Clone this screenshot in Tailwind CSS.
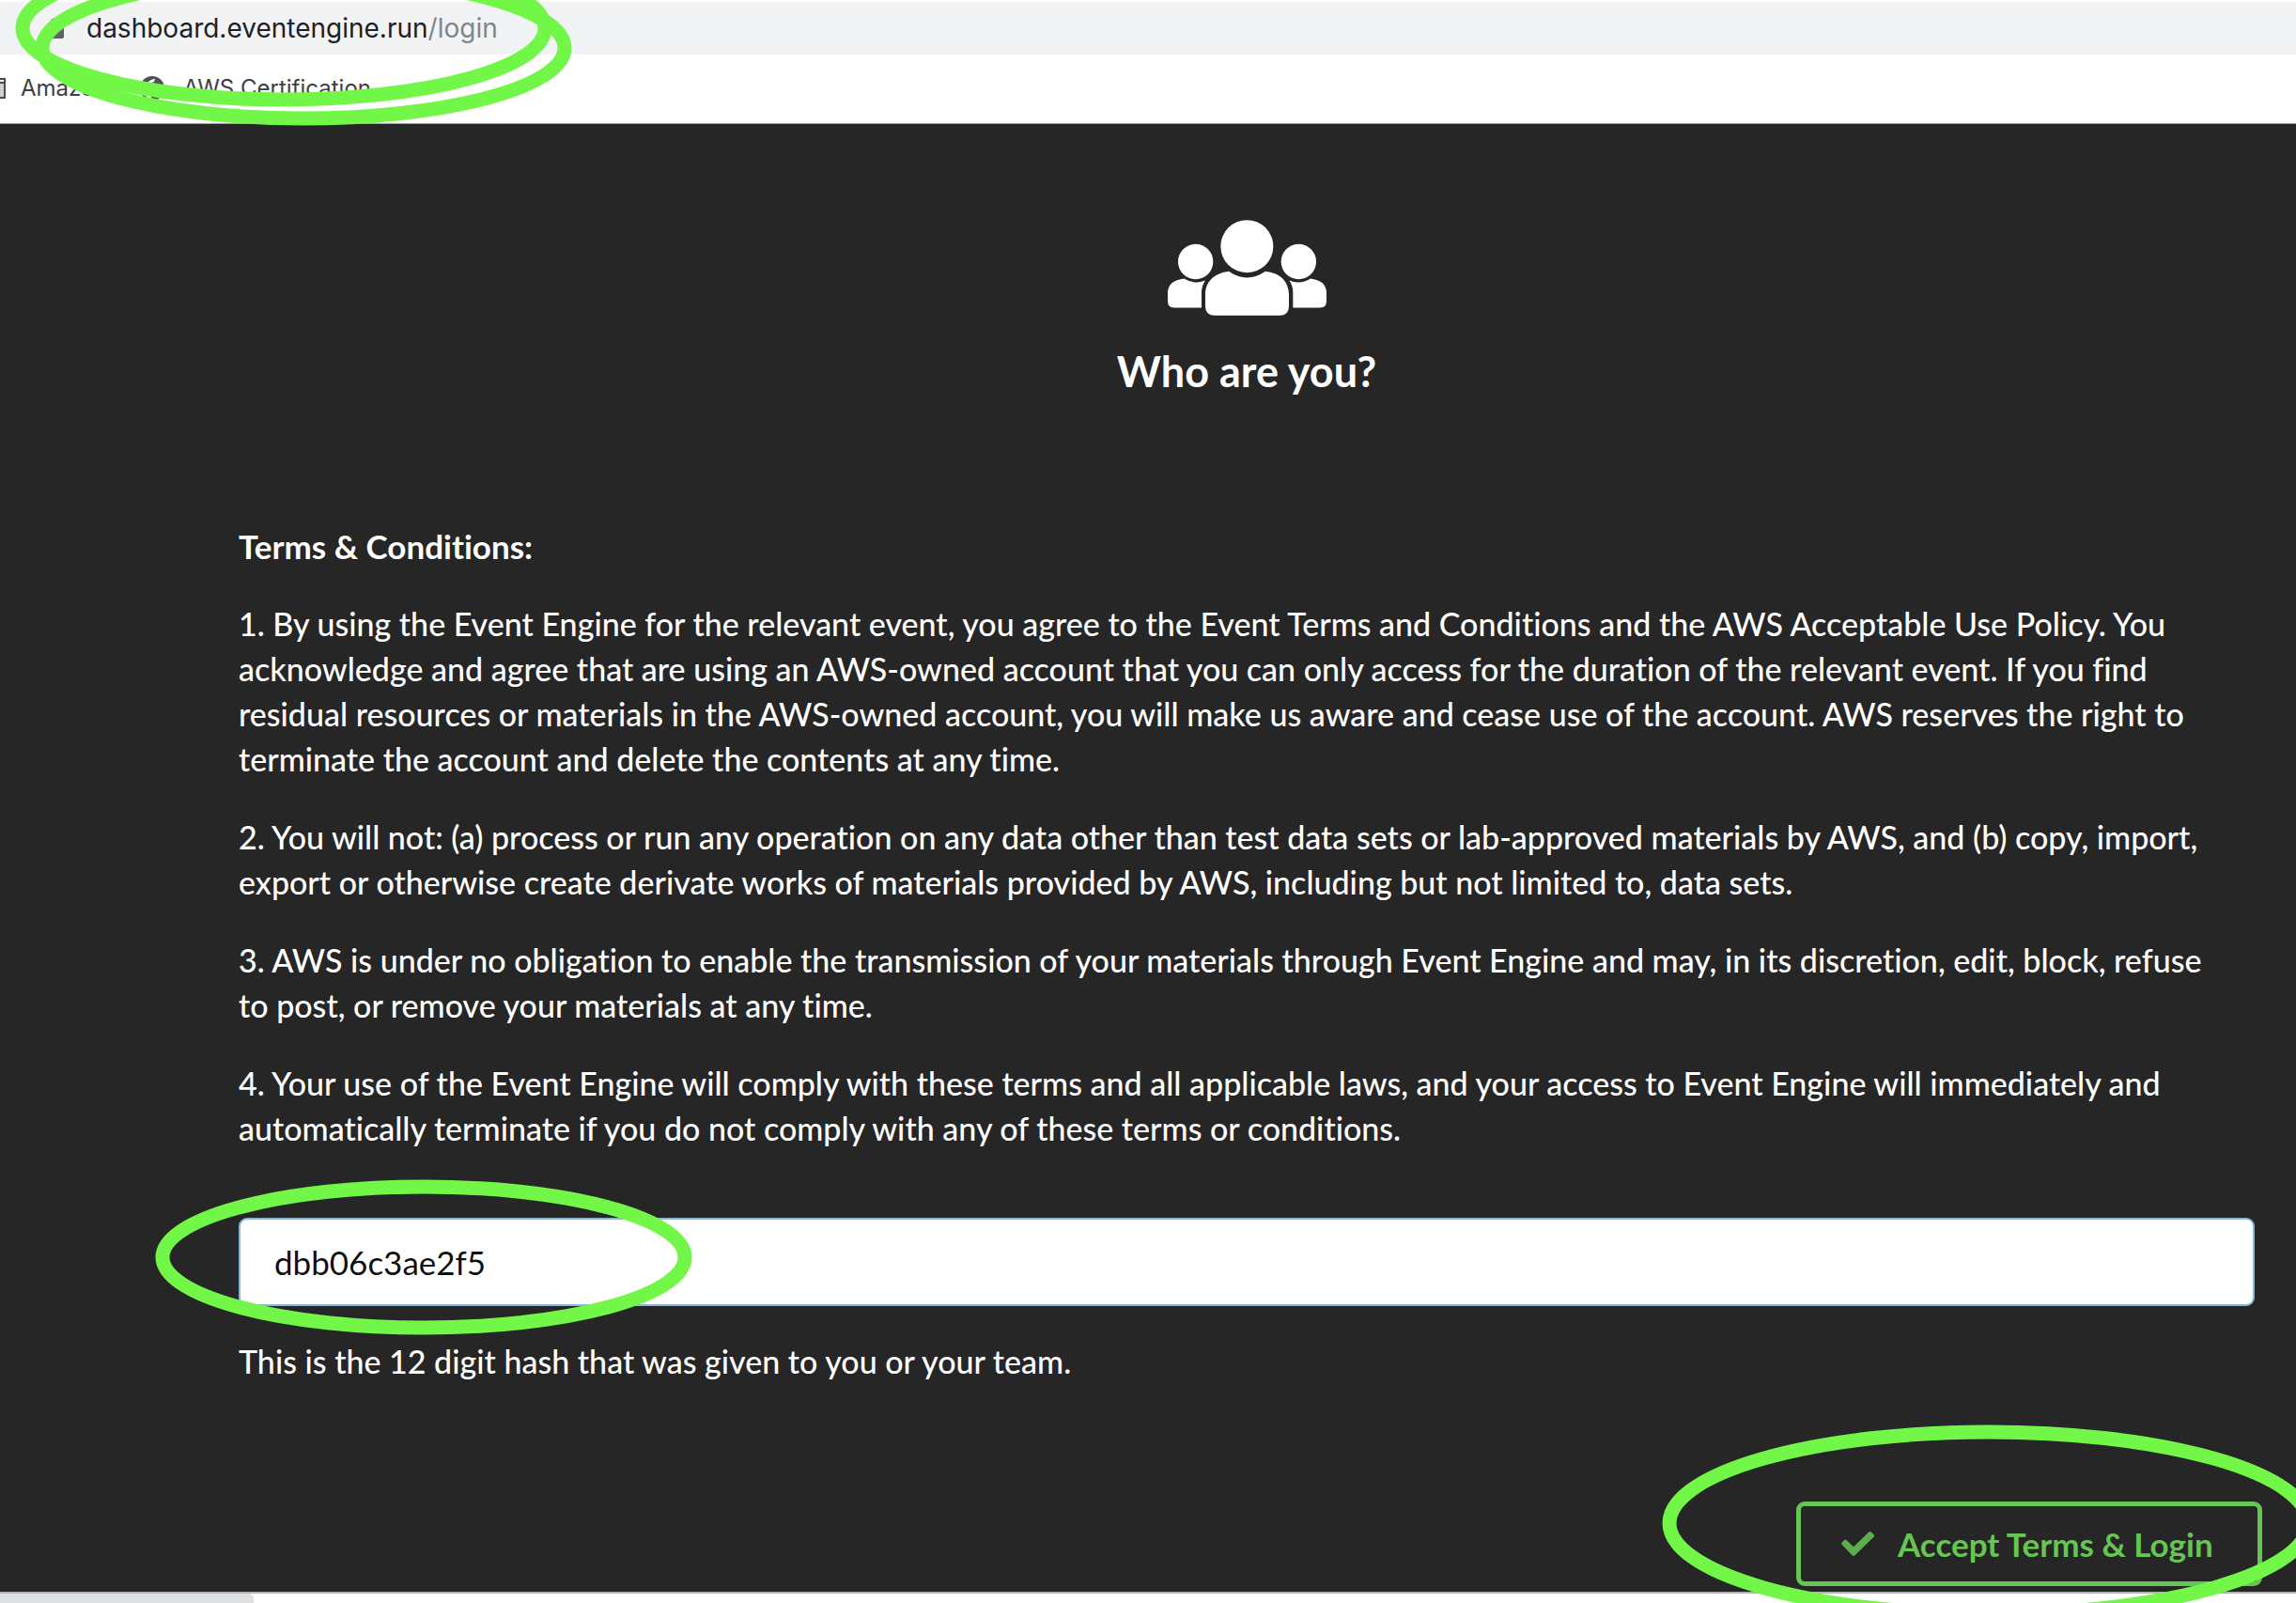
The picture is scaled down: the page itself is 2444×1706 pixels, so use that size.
<!DOCTYPE html>
<html lang="en">
<head>
    <meta charset="UTF-8">
    <meta name="viewport" content="width=device-width, initial-scale=1.0">
    <title>Event Engine - Login</title>
    <script src="https://cdn.jsdelivr.net/npm/@tailwindcss/browser@4"></script>
</head>
<body class="bg-white">
<div class="relative flex min-h-screen flex-col overflow-hidden">

    <!-- Browser bar -->
    <header class="relative border-b border-[#a0a8a4] bg-white font-['Inter',sans-serif]">
        <div class="mt-[2px] flex h-14 items-center gap-6 bg-[#f1f3f4] pl-[50px]">
            <svg class="h-[22px] w-[18px] fill-[#5f6368]" viewBox="0 0 18 22"><path d="M2 8h14a2 2 0 0 1 2 2v10a2 2 0 0 1-2 2H2a2 2 0 0 1-2-2V10a2 2 0 0 1 2-2z"/><path d="M4 9V6a5 5 0 0 1 10 0v3" fill="none" stroke="#5f6368" stroke-width="2"/></svg>
            <a href="#" class="text-[28px] text-[#202124]">dashboard.eventengine.run<span class="text-[#80868b]">/login</span></a>
        </div>
        <nav class="flex h-[73px] items-center pb-[2px] text-[24px] text-[#3c4043]">
            <a href="#" class="flex w-[149px] items-center gap-4">
                <svg class="h-[22px] w-[6px]" viewBox="0 0 6 22"><path d="M0 1h5v20H0" fill="#fff" stroke="#4a4a4a" stroke-width="2"/><path d="M0 5h5" stroke="#4a4a4a" stroke-width="2"/><path d="M0 6h4v14H0z" fill="#d0d0d0"/></svg>
                Amazon
            </a>
            <a href="#" class="flex items-center gap-5">
                <svg class="size-[26px]" viewBox="0 0 26 26"><circle cx="13" cy="13" r="13" fill="#4d5156"/><path d="M16 3c-4 0-8 3-10 7l4 0 2-3 3-1zM3 14l6 2 3 5v3C7 24 4 19 3 14z" fill="#fff"/></svg>
                AWS Certification
            </a>
        </nav>
        <svg class="pointer-events-none absolute -top-[60px] left-0 z-10 h-[200px] w-[620px] fill-none stroke-[#72f648]" viewBox="0 -60 620 200" stroke-width="15">
            <ellipse cx="302" cy="30" rx="278" ry="76"/>
            <ellipse cx="323" cy="51" rx="278" ry="75"/>
        </svg>
    </header>

    <!-- Login page -->
    <main class="flex-1 bg-[#262626] pt-[102px] pr-11 pb-[6px] pl-[254px] font-['Lato',sans-serif] text-[34px] leading-[48px] font-medium text-white [font-variant-ligatures:none]">
        <div class="flex flex-col items-center gap-[30px]">
            <svg class="h-[102px] w-[169px] fill-white" viewBox="248 73 507 305">
                <circle cx="501" cy="157" r="84"/>
                <circle cx="337" cy="206" r="56"/>
                <circle cx="666" cy="206" r="56"/>
                <path d="M443 237Q501 277 560 237C605 242 635 268 635 312V348Q635 378 605 378H398Q368 378 368 348V312C368 268 398 243 443 237z"/>
                <path d="M300 260Q332 280 368 266Q356 282 356 305V353H269Q248 353 248 332V303Q250 266 300 260z"/>
                <path d="M704 260Q672 280 636 266Q648 282 648 305V353H734Q755 353 755 332V303Q753 266 704 260z"/>
            </svg>
            <h1 class="text-[45px] leading-[58px] font-bold">Who are you?</h1>
        </div>

        <form>
            <section class="mt-[133px] flex flex-col gap-[35px]">
                <h2 class="text-[35px] font-bold">Terms &amp; Conditions:</h2>
                <p>1. By using the Event Engine for the relevant event, you agree to the Event Terms and Conditions and the AWS Acceptable Use Policy. You acknowledge and agree that are using an AWS-owned account that you can only access for the duration of the relevant event. If you find residual resources or materials in the AWS-owned account, you will make us aware and cease use of the account. AWS reserves the right to terminate the account and delete the contents at any time.</p>
                <p>2. You will not: (a) process or run any operation on any data other than test data sets or lab-approved materials by AWS, and (b) copy, import, export or otherwise create derivate works of materials provided by AWS, including but not limited to, data sets.</p>
                <p>3. AWS is under no obligation to enable the transmission of your materials through Event Engine and may, in its discretion, edit, block, refuse to&nbsp;post, or remove your materials at any time.</p>
                <p>4. Your use of the Event Engine will comply with these terms and all applicable laws, and your access to Event Engine will immediately and automatically terminate if you do not comply with any of these terms or conditions.</p>
            </section>

            <div class="relative mt-[71px]">
                <input id="hash" type="text" value="dbb06c3ae2f5" class="block h-[94px] w-full rounded-[9px] border-2 border-[#85b7d9] bg-white px-9 text-[35px] font-normal text-black/95 outline-none">
                <svg class="pointer-events-none absolute -top-[44px] -left-[94px] h-[174px] w-[580px] fill-none stroke-[#72f648]" viewBox="0 0 580 174" stroke-width="15">
                    <ellipse cx="291" cy="86" rx="278" ry="75"/>
                </svg>
            </div>
            <label for="hash" class="mt-[35px] block">This is the 12 digit hash that was given to you or your team.</label>

            <div class="relative mt-[125px] -mr-2 flex justify-end">
                <button type="submit" class="flex h-[90px] w-[496px] items-center gap-6 rounded-[9px] border-[5px] border-[#66c653] pl-[43px] text-[35px] font-bold text-[#66c653]">
                    <svg class="h-[26px] w-[36px] fill-[#5aaf4b]" viewBox="0 0 36 26"><path d="M3.5 8.7Q4.500 8 5.500 9L13 16.300 29 .700Q30.500-.500 32 .700L34.500 3Q35.700 4.300 34.500 5.700L14.500 25.300Q13 26.500 11.500 25.300L.700 14Q-.300 12.700 .700 11.500z"/></svg>
                    Accept Terms &amp; Login
                </button>
                <svg class="pointer-events-none absolute -top-[88px] -right-[64px] h-[220px] w-[710px] fill-none stroke-[#72f648]" viewBox="0 0 710 220" stroke-width="15">
                    <ellipse cx="355" cy="111" rx="340" ry="97"/>
                </svg>
            </div>
        </form>
    </main>

    <!-- Downloads strip -->
    <footer class="h-3 border-t-2 border-[#b2b2b2] bg-white">
        <div class="h-full w-[270px] rounded-tr-[5px] bg-[#dee0e2]"></div>
    </footer>
</div>
</body>
</html>
